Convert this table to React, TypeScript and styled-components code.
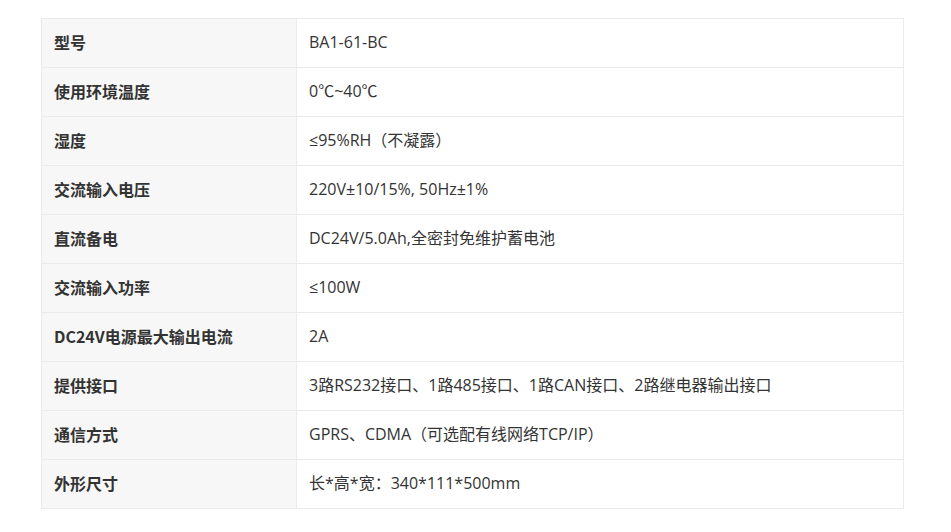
import React from "react";
import styled, { createGlobalStyle } from "styled-components";

const Global = createGlobalStyle`
  html, body { margin: 0; padding: 0; background: #ffffff; }
  body { font-family: "Open Sans", "Noto Sans CJK SC", sans-serif; color: #333333; }
`;

const Page = styled.div`
  padding: 18px 0 0 41px;
`;

const Table = styled.table`
  width: 863px;
  border-collapse: collapse;
  table-layout: fixed;
  border: 1px solid #ebebeb;
`;

const Row = styled.tr`
  height: 49px;
`;

const Label = styled.td`
  width: 255px;
  box-sizing: border-box;
  padding: 0 0 2px 12px;
  background: #f7f7f7;
  border: 1px solid #ebebeb;
  font-family: "Noto Sans CJK SC", sans-serif;
  font-weight: 700;
  font-size: 16px;
  line-height: 20px;
  color: #333333;
  vertical-align: middle;
`;

const Value = styled.td`
  padding: 0 0 2px 12px;
  background: #ffffff;
  border: 1px solid #ebebeb;
  font-family: "Open Sans", "Noto Sans CJK SC", sans-serif;
  font-size: 16px;
  line-height: 20px;
  color: #333333;
  vertical-align: middle;
  white-space: nowrap;
`;

const rows: [string, string][] = [
  ["型号", "BA1-61-BC"],
  ["使用环境温度", "0℃~40℃"],
  ["湿度", "≤95%RH（不凝露）"],
  ["交流输入电压", "220V±10/15%, 50Hz±1%"],
  ["直流备电", "DC24V/5.0Ah,全密封免维护蓄电池"],
  ["交流输入功率", "≤100W"],
  ["DC24V电源最大输出电流", "2A"],
  ["提供接口", "3路RS232接口、1路485接口、1路CAN接口、2路继电器输出接口"],
  ["通信方式", "GPRS、CDMA（可选配有线网络TCP/IP）"],
  ["外形尺寸", "长*高*宽：340*111*500mm"],
];

export default function App() {
  return (
    <Page>
      <Global />
      <Table>
        <tbody>
          {rows.map(([k, v]) => (
            <Row key={k}>
              <Label>{k}</Label>
              <Value>{v}</Value>
            </Row>
          ))}
        </tbody>
      </Table>
    </Page>
  );
}
